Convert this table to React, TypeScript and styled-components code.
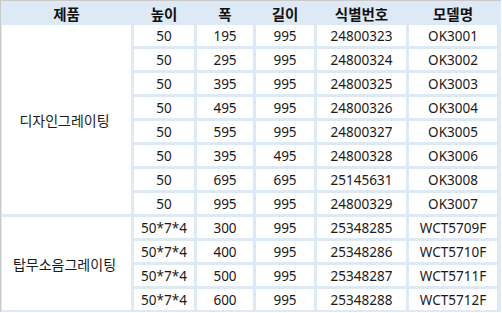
import React from "react";
import styled, {createGlobalStyle} from "styled-components";

const GlobalStyle = createGlobalStyle`
  html, body {
    margin: 0;
    padding: 0;
    background: #ffffff;
  }
  body {
    font-family: "Noto Sans", "Noto Sans CJK KR", sans-serif;
  }
`;

const Frame = styled.div`
  width: 501px;
  height: 312px;
  overflow: hidden;
  background: #dde9f5;
  border-left: 1px solid #c9c9c9;
  border-top: 1px solid #c9c9c9;
  padding-left: 1px;
  box-sizing: border-box;
`;

const columns = "129px 60px 56px 58px 89px 88px";

const HeadRow = styled.div`
  display: grid;
  grid-template-columns: ${columns};
  column-gap: 3px;
  height: 24px;
`;

const HeadCell = styled.div`
  display: flex;
  align-items: center;
  justify-content: center;
  padding-top: 1px;
  font-size: 14.5px;
  font-weight: 700;
  color: #111;
  font-family: "Noto Sans CJK KR", "Noto Sans", sans-serif;
`;

const Body = styled.div`
  display: grid;
  grid-template-columns: ${columns};
  grid-auto-rows: 21px;
  gap: 3px;
`;

const Cell = styled.div`
  display: flex;
  align-items: center;
  justify-content: center;
  background: #ffffff;
  font-size: 13.5px;
  color: #1a1a1a;
  white-space: nowrap;
`;

const GroupCell = styled(Cell)<{ $span: number }>`
  grid-row: span ${p => p.$span};
  font-family: "Noto Sans CJK KR", "Noto Sans", sans-serif;
  font-size: 14px;
  padding-right: 4px;
`;

const headers = ["제품", "높이", "폭", "길이", "식별번호", "모델명"];

const groups = [
    {
        name: "디자인그레이팅",
        rows: [
            ["50", "195", "995", "24800323", "OK3001"],
            ["50", "295", "995", "24800324", "OK3002"],
            ["50", "395", "995", "24800325", "OK3003"],
            ["50", "495", "995", "24800326", "OK3004"],
            ["50", "595", "995", "24800327", "OK3005"],
            ["50", "395", "495", "24800328", "OK3006"],
            ["50", "695", "695", "25145631", "OK3008"],
            ["50", "995", "995", "24800329", "OK3007"],
        ],
    },
    {
        name: "탑무소음그레이팅",
        rows: [
            ["50*7*4", "300", "995", "25348285", "WCT5709F"],
            ["50*7*4", "400", "995", "25348286", "WCT5710F"],
            ["50*7*4", "500", "995", "25348287", "WCT5711F"],
            ["50*7*4", "600", "995", "25348288", "WCT5712F"],
        ],
    },
];

const App: React.FC = () => {
    return (
        <>
            <GlobalStyle/>
            <Frame>
                <HeadRow>
                    {headers.map(h => <HeadCell key={h}>{h}</HeadCell>)}
                </HeadRow>
                <Body>
                    {groups.map(g => (
                        <React.Fragment key={g.name}>
                            {g.rows.map((r, i) => (
                                <React.Fragment key={i}>
                                    {i === 0 && <GroupCell $span={g.rows.length}>{g.name}</GroupCell>}
                                    {r.map((v, j) => <Cell key={j}>{v}</Cell>)}
                                </React.Fragment>
                            ))}
                        </React.Fragment>
                    ))}
                </Body>
            </Frame>
        </>
    );
};

export default App;
